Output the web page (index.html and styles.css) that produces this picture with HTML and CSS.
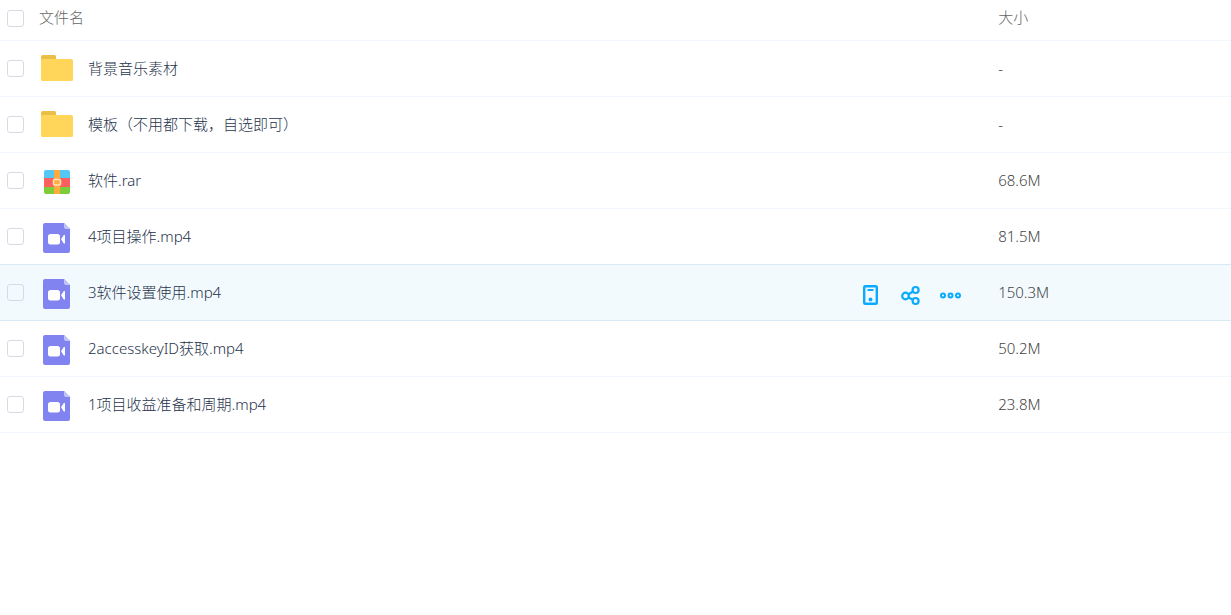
FILE: index.html
```html
<!DOCTYPE html>
<html lang="zh-CN">
<head>
    <meta charset="UTF-8">
    <title>文件列表</title>
    <link rel="stylesheet" href="styles.css">
</head>
<body>
    <!-- 图标 -->
    <svg class="sprite" aria-hidden="true">
        <symbol id="icon-folder" viewBox="0 0 34 34">
            <path d="M1 8V3.500Q1 2 2.500 2H14.500Q16 2 16 3.500V8z" fill="#eabf47"/>
            <rect x="1" y="6" width="32" height="22" rx="1.500" fill="#ffd659"/>
        </symbol>
        <symbol id="icon-rar" viewBox="0 0 34 34">
            <path d="M4 13V7Q4 5 6 5H28Q30 5 30 7V13z" fill="#55c7f7"/>
            <path d="M4 13H30V22H4z" fill="#fb5f5e"/>
            <path d="M4 22H30V27Q30 29 28 29H6Q4 29 4 27z" fill="#7ccd38"/>
            <path d="M14 5H20V29H14z" fill="#ffab40"/>
            <rect x="13.500" y="14.500" width="7" height="5.500" rx="1" fill="#ffab40" stroke="#ffe3ba" stroke-width="1.500"/>
        </symbol>
        <symbol id="icon-video" viewBox="0 0 34 34">
            <path d="M3 4Q3 2 5 2H24L30 8V30Q30 32 28 32H5Q3 32 3 30z" fill="#8183f1"/>
            <path d="M24 2L30 8H26Q24 8 24 6z" fill="#c3c4fa"/>
            <rect x="8" y="13" width="12" height="10.500" rx="2.500" fill="#fff"/>
            <path d="M21 18.200L23.600 14.200Q25 13 25 15V21.500Q25 23.400 23.600 22.300z" fill="#fff"/>
        </symbol>
    </svg>

    <table class="file-list">
        <thead>
            <tr>
                <th class="col-check"><input type="checkbox" id="checkAll" class="check" aria-label="全选"></th>
                <th class="col-name">文件名</th>
                <th class="col-size">大小</th>
            </tr>
        </thead>
        <tbody>
            <tr>
                <td class="col-check"><input type="checkbox" id="file1" class="check"></td>
                <td class="col-name">
                    <div class="file">
                        <svg class="file-icon"><use href="#icon-folder"/></svg>
                        <label for="file1">背景音乐素材</label>
                    </div>
                </td>
                <td class="col-size">-</td>
            </tr>
            <tr>
                <td class="col-check"><input type="checkbox" id="file2" class="check"></td>
                <td class="col-name">
                    <div class="file">
                        <svg class="file-icon"><use href="#icon-folder"/></svg>
                        <label for="file2">模板（不用都下载，自选即可）</label>
                    </div>
                </td>
                <td class="col-size">-</td>
            </tr>
            <tr>
                <td class="col-check"><input type="checkbox" id="file3" class="check"></td>
                <td class="col-name">
                    <div class="file">
                        <svg class="file-icon"><use href="#icon-rar"/></svg>
                        <label for="file3">软件.rar</label>
                    </div>
                </td>
                <td class="col-size">68.6M</td>
            </tr>
            <tr>
                <td class="col-check"><input type="checkbox" id="file4" class="check"></td>
                <td class="col-name">
                    <div class="file">
                        <svg class="file-icon"><use href="#icon-video"/></svg>
                        <label for="file4">4项目操作.mp4</label>
                    </div>
                </td>
                <td class="col-size">81.5M</td>
            </tr>
            <tr class="active">
                <td class="col-check"><input type="checkbox" id="file5" class="check"></td>
                <td class="col-name">
                    <div class="file">
                        <svg class="file-icon"><use href="#icon-video"/></svg>
                        <label for="file5">3软件设置使用.mp4</label>
                        <div class="actions">
                            <button type="button" aria-label="保存到手机">
                                <svg viewBox="0 0 22 22">
                                    <rect x="4.200" y="2.200" width="12.600" height="17.600" rx="1" fill="none" stroke="currentColor" stroke-width="2.400"/>
                                    <path d="M7.500 6H13.500" stroke="currentColor" stroke-width="2"/>
                                    <circle cx="10.500" cy="15.500" r="2" fill="currentColor"/>
                                </svg>
                            </button>
                            <button type="button" aria-label="分享">
                                <svg viewBox="0 0 22 22" fill="none" stroke="currentColor" stroke-width="2.200">
                                    <circle cx="5.500" cy="12" r="3.300"/>
                                    <circle cx="15.600" cy="6" r="3"/>
                                    <circle cx="15.600" cy="17" r="3"/>
                                    <path d="M8.500 10.200L13 7.500M8.500 13.500L13 15.700"/>
                                </svg>
                            </button>
                            <button type="button" aria-label="更多">
                                <svg viewBox="0 0 22 22" fill="none" stroke="currentColor" stroke-width="2">
                                    <circle cx="3" cy="11.500" r="2"/>
                                    <circle cx="10.500" cy="11.500" r="2"/>
                                    <circle cx="18" cy="11.500" r="2"/>
                                </svg>
                            </button>
                        </div>
                    </div>
                </td>
                <td class="col-size">150.3M</td>
            </tr>
            <tr>
                <td class="col-check"><input type="checkbox" id="file6" class="check"></td>
                <td class="col-name">
                    <div class="file">
                        <svg class="file-icon"><use href="#icon-video"/></svg>
                        <label for="file6">2accesskeyID获取.mp4</label>
                    </div>
                </td>
                <td class="col-size">50.2M</td>
            </tr>
            <tr>
                <td class="col-check"><input type="checkbox" id="file7" class="check"></td>
                <td class="col-name">
                    <div class="file">
                        <svg class="file-icon"><use href="#icon-video"/></svg>
                        <label for="file7">1项目收益准备和周期.mp4</label>
                    </div>
                </td>
                <td class="col-size">23.8M</td>
            </tr>
        </tbody>
    </table>
</body>
</html>
```
FILE: styles.css
```css
body {
    margin: 0;
    background-color: #fff;
    font-family: Tahoma, "Noto Sans", "Noto Sans CJK SC", sans-serif;
    font-size: 15px;
    font-weight: 300;
    line-height: 20px;
    color: #27334c;
}
.sprite {
    display: none;
}
.file-list {
    width: 100%;
    table-layout: fixed;
    border-collapse: separate;
    border-spacing: 0;
}
.file-list th,
.file-list td {
    box-sizing: border-box;
    padding: 0;
    border-bottom: 1px solid #f2f6fd;
    text-align: left;
    font-weight: inherit;
    vertical-align: middle;
}
.file-list th {
    height: 41px;
    padding-bottom: 6px;
    color: #666;
}
.file-list th.col-check {
    padding-bottom: 4px;
}
.file-list td {
    height: 56px;
}
.file-list .col-check {
    width: 39px;
    padding-left: 7px;
}
.file-list .col-size {
    width: 19%;
    padding-left: 1px;
}
.file-list td.col-size {
    padding-bottom: 2px;
    color: #444;
}
.check {
    display: block;
    appearance: none;
    box-sizing: border-box;
    width: 17px;
    height: 17px;
    margin: 0;
    border: 1px solid #d5dbe5;
    border-radius: 3px;
    background-color: #fff;
    cursor: pointer;
}
.check:checked {
    background-color: #09aaff;
    border-color: #09aaff;
}
.file {
    display: flex;
    align-items: center;
}
.file label {
    padding-bottom: 2px;
}
.file-icon {
    flex: none;
    width: 34px;
    height: 34px;
    margin: 2px 14px 0 1px;
}
.actions {
    display: flex;
    gap: 18px;
    margin-left: auto;
    padding: 5px 35px 0 0;
}
.actions button {
    width: 22px;
    height: 22px;
    padding: 0;
    border: none;
    background: none;
    color: #09aaff;
    cursor: pointer;
}
.actions svg {
    display: block;
    width: 22px;
    height: 22px;
}
.active td {
    background-color: #f3fafe;
}
.active .check {
    background-color: transparent;
}
.active td,
tr:has(+ .active) td {
    border-bottom-color: #d8e9f6;
}
```
